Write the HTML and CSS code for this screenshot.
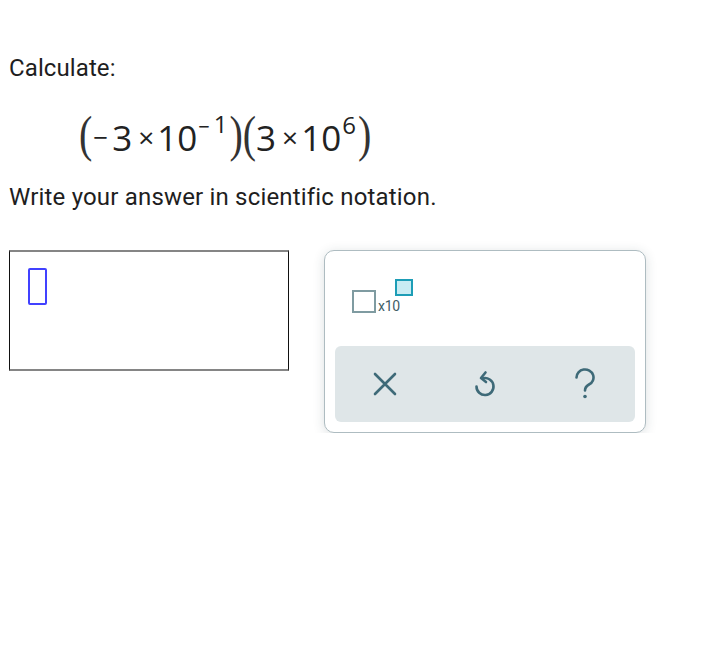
FILE: index.html
```html
<!DOCTYPE html>
<html>
<head>
<meta charset="utf-8">
<link rel="stylesheet" href="styles.css">
</head>
<body>
<div class="page">
  <div class="prompt">Calculate:</div>
  <div class="math">
    <span class="paren">(</span><span class="minus">−</span><span class="num">3</span><span class="times">×</span><span class="num">10</span><span class="sup"><span class="supminus">−</span>1</span><span class="paren">)</span><span class="paren">(</span><span class="num">3</span><span class="times">×</span><span class="num">10</span><span class="sup">6</span><span class="paren">)</span>
  </div>
  <div class="prompt instr">Write your answer in scientific notation.</div>
  <div class="work">
    <div class="answer"><div class="cursor"></div></div>
    <div class="panel">
      <div class="tools">
        <div class="sci">
          <div class="basebox"></div>
          <span class="x10">x10</span>
          <div class="expbox"></div>
        </div>
      </div>
      <div class="bar">
        <div class="key">
          <svg width="24" height="24" viewBox="0 0 24 24"><path d="M2 2 L22 22 M22 2 L2 22" fill="none" stroke="#3e6a78" stroke-width="2.6" stroke-linecap="round"/></svg>
        </div>
        <div class="key">
          <svg width="26" height="30" viewBox="0 0 26 30"><path d="M4.5 17.5 A8.5 8.5 0 1 0 11 9.3" fill="none" stroke="#3e6a78" stroke-width="2.6" stroke-linecap="round"/><path d="M13.5 3.5 L9 9 L14 13" fill="none" stroke="#3e6a78" stroke-width="2.6" stroke-linecap="round" stroke-linejoin="round"/></svg>
        </div>
        <div class="key">
          <svg width="24" height="32" viewBox="0 0 24 32"><path d="M3.5 9.5 A8.5 8 0 1 1 16 16.5 C13 18.2 12 19.5 12 22.5" fill="none" stroke="#3e6a78" stroke-width="2.6" stroke-linecap="round"/><circle cx="12" cy="28.5" r="1.8" fill="#3e6a78"/></svg>
        </div>
      </div>
    </div>
  </div>
</div>
</body>
</html>
```
FILE: styles.css
```css
html, body {
  margin: 0;
  padding: 0;
  background: #ffffff;
}
.page {
  padding: 54px 0 0 9px;
  font-family: Roboto, "Liberation Sans", sans-serif;
  color: #1e1e1e;
}
.prompt {
  font-size: 24px;
  line-height: 28px;
  letter-spacing: 0.1px;
}
.math {
  margin-top: 29px;
  height: 48px;
  display: flex;
  align-items: center;
  padding-left: 70px;
  font-family: "Open Sans", "Noto Sans", sans-serif;
  font-size: 35px;
  color: #222;
}
.math span {
  display: inline-block;
  line-height: 48px;
}
.paren {
  font-family: "Liberation Serif", serif;
  font-size: 40px;
  transform: scaleY(1.25);
  color: #333;
}
.num {
  letter-spacing: 0;
  position: relative;
  top: 3px;
}
.minus {
  font-size: 26px;
  margin: 0 4px 0 1px;
  position: relative;
  top: 2px;
}
.times {
  font-size: 28px;
  margin: 0 3px 0 6px;
  position: relative;
  top: 2px;
}
.sup {
  font-size: 24px;
  position: relative;
  top: -10px;
  margin-left: 1px;
  margin-right: 2px;
}
.supminus {
  font-size: 20px;
  margin-right: 4px;
  position: relative;
  top: 1px;
}
.instr {
  margin-top: 24px;
  letter-spacing: 0.18px;
}
.work {
  margin-top: 39px;
  display: flex;
  align-items: flex-start;
}
.answer {
  box-sizing: border-box;
  width: 280px;
  height: 121px;
  border-left: 1px solid #111;
  border-right: 1px solid #111;
  border-top: 2px solid #858585;
  border-bottom: 2px solid #858585;
  padding: 16px 0 0 18px;
}
.cursor {
  box-sizing: border-box;
  width: 19px;
  height: 37px;
  border: 2px solid #4141ff;
  border-radius: 2px;
}
.panel {
  box-sizing: border-box;
  margin-left: 35px;
  width: 322px;
  height: 183px;
  border: 1px solid #aebcc1;
  border-radius: 10px;
  box-shadow: 0 2px 12px rgba(40, 60, 70, 0.16);
  padding: 0 10px 10px 10px;
  display: flex;
  flex-direction: column;
  background: #fff;
}
.tools {
  height: 95px;
  padding: 28px 0 0 17px;
  box-sizing: border-box;
}
.sci {
  display: flex;
  height: 34px;
}
.basebox {
  box-sizing: border-box;
  align-self: flex-end;
  width: 24px;
  height: 23px;
  border: 2px solid #7f9ba1;
}
.x10 {
  align-self: flex-end;
  font-size: 14px;
  line-height: 14px;
  color: #3f5d66;
  margin-left: 2px;
  margin-bottom: 0px;
  letter-spacing: -0.3px;
}
.expbox {
  box-sizing: border-box;
  align-self: flex-start;
  width: 18px;
  height: 17px;
  border: 2px solid #1d9db6;
  background: #c9ecf3;
  margin-left: -5px;
}
.bar {
  flex: 1;
  background: #dfe6e8;
  border-radius: 6px;
  display: grid;
  grid-template-columns: 1fr 1fr 1fr;
  align-items: center;
  justify-items: center;
}
.key {
  display: flex;
  align-items: center;
  justify-content: center;
}
.key svg {
  display: block;
}
```
